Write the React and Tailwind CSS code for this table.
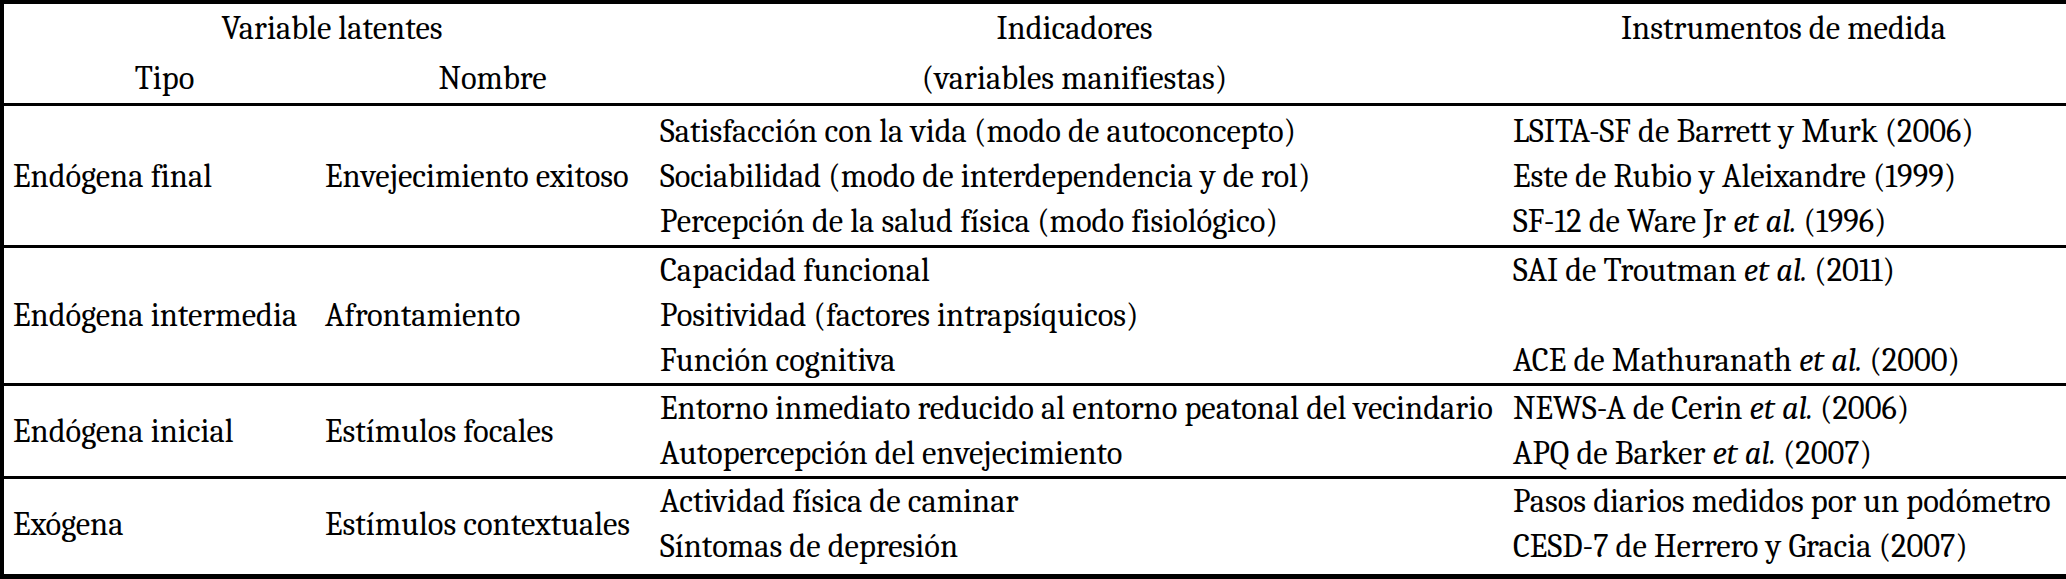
import React from "react";

const groups = [
  {
    tipo: "Endógena final",
    nombre: "Envejecimiento exitoso",
    cls: "pt-[3px] pb-[1px]",
    rows: [
      ["Satisfacción con la vida (modo de autoconcepto)", <>LSITA-SF de Barrett y Murk (2006)</>],
      ["Sociabilidad (modo de interdependencia y de rol)", <>Este de Rubio y Aleixandre (1999)</>],
      ["Percepción de la salud física (modo fisiológico)", <>SF-12 de Ware Jr <i>et al.</i> (1996)</>],
    ],
  },
  {
    tipo: "Endógena intermedia",
    nombre: "Afrontamiento",
    cls: "pt-0 pb-0",
    rows: [
      ["Capacidad funcional", <>SAI de Troutman <i>et al.</i> (2011)</>],
      ["Positividad (factores intrapsíquicos)", <></>],
      ["Función cognitiva", <>ACE de Mathuranath <i>et al.</i> (2000)</>],
    ],
  },
  {
    tipo: "Endógena inicial",
    nombre: "Estímulos focales",
    cls: "pt-0 pb-0",
    rows: [
      ["Entorno inmediato reducido al entorno peatonal del vecindario", <>NEWS-A de Cerin <i>et al.</i> (2006)</>],
      ["Autopercepción del envejecimiento", <>APQ de Barker <i>et al.</i> (2007)</>],
    ],
  },
  {
    tipo: "Exógena",
    nombre: "Estímulos contextuales",
    cls: "pt-0 pb-[5px]",
    rows: [
      ["Actividad física de caminar", <>Pasos diarios medidos por un podómetro</>],
      ["Síntomas de depresión", <>CESD-7 de Herrero y Gracia (2007)</>],
    ],
  },
];

const spanClass = {
  2: "row-span-2",
  3: "row-span-3",
};

function Rule() {
  return <div className="h-[3px] w-full bg-black" />;
}

export default function App() {
  return (
    <div className="w-[2066px] h-[579px] bg-white text-black border-t-4 border-l-4 border-b-[5px] border-black flex flex-col overflow-hidden text-[32.5px] leading-[45px] whitespace-nowrap font-serif">
      {/* Header */}
      <div className="grid grid-cols-[321px_335px_853px_1fr]">
        <div className="col-span-2 h-[49px] flex items-center justify-center"><span>Variable latentes</span></div>
        <div className="h-[49px] flex items-center justify-center pr-[24px]"><span>Indicadores</span></div>
        <div className="h-[49px] flex items-center justify-center pr-[12px]"><span>Instrumentos de medida</span></div>
        <div className="h-[50px] flex items-center justify-center"><span>Tipo</span></div>
        <div className="h-[50px] flex items-center justify-center"><span>Nombre</span></div>
        <div className="h-[50px] flex items-center justify-center pr-[24px]"><span>(variables manifiestas)</span></div>
        <div className="h-[50px]" />
      </div>
      {groups.map((g, gi) => (
        <React.Fragment key={gi}>
          <Rule />
          <div className={`grid grid-cols-[321px_335px_853px_1fr] ${g.cls}`}>
            <div className={`col-start-1 row-start-1 ${spanClass[g.rows.length]} pl-[9px] flex items-center`}>
              <span>{g.tipo}</span>
            </div>
            <div className={`col-start-2 row-start-1 ${spanClass[g.rows.length]} flex items-center`}>
              <span>{g.nombre}</span>
            </div>
            <div className={`col-start-3 row-start-1 ${spanClass[g.rows.length]} flex flex-col`}>
              {g.rows.map((r, ri) => (
                <div key={ri} className="h-[45px] flex items-center">
                  <span>{r[0]}</span>
                </div>
              ))}
            </div>
            <div className={`col-start-4 row-start-1 ${spanClass[g.rows.length]} flex flex-col`}>
              {g.rows.map((r, ri) => (
                <div key={ri} className="h-[45px] flex items-center">
                  <span>{r[1]}</span>
                </div>
              ))}
            </div>
          </div>
        </React.Fragment>
      ))}
    </div>
  );
}
